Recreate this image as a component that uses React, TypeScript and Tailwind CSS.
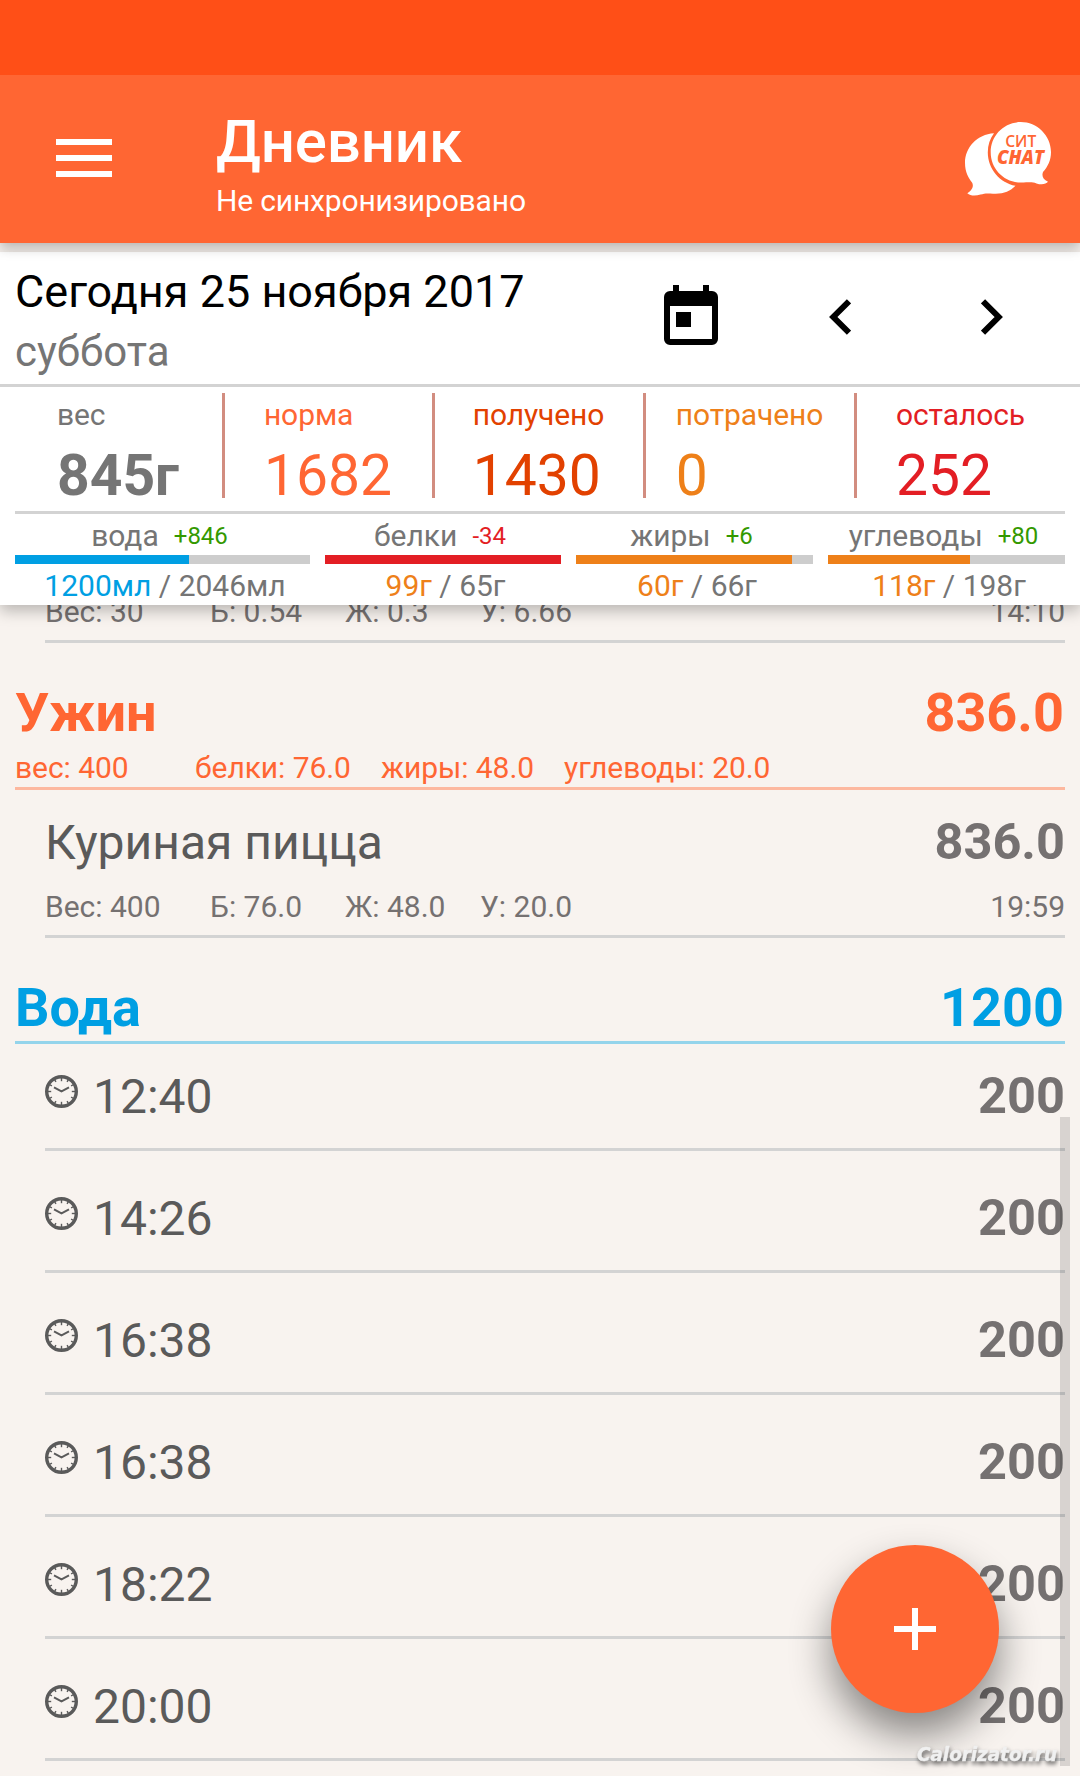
import React from "react";

const stats = [
  { label: "вес", value: "845г", tone: "text-[#757575]", weight: "font-bold" },
  { label: "норма", value: "1682", tone: "text-[#ff6633]", weight: "font-normal" },
  { label: "получено", value: "1430", tone: "text-[#e24100]", weight: "font-normal" },
  { label: "потрачено", value: "0", tone: "text-[#ee8019]", weight: "font-normal" },
  { label: "осталось", value: "252", tone: "text-[#e31e24]", weight: "font-normal" },
];

const macros = [
  { label: "вода", delta: "+846", deltaTone: "text-[#339900]", now: "1200мл", goal: "2046мл", tone: "text-[#009fe3]", bar: "bg-[#009fe3]", pct: 59 },
  { label: "белки", delta: "-34", deltaTone: "text-[#e31e24]", now: "99г", goal: "65г", tone: "text-[#ee8019]", bar: "bg-[#e31e24]", pct: 100 },
  { label: "жиры", delta: "+6", deltaTone: "text-[#339900]", now: "60г", goal: "66г", tone: "text-[#ee8019]", bar: "bg-[#ee8019]", pct: 91 },
  { label: "углеводы", delta: "+80", deltaTone: "text-[#339900]", now: "118г", goal: "198г", tone: "text-[#ee8019]", bar: "bg-[#ee8019]", pct: 60 },
];

const waterTimes = ["12:40", "14:26", "16:38", "16:38", "18:22", "20:00"];

function Clock() {
  const ticks = Array.from({ length: 12 }, (_, i) => i * 30);
  return (
    <svg className="mt-[31px] h-[33px] w-[33px] shrink-0" viewBox="0 0 33 33" fill="none" stroke="#5a5a5a">
      <circle cx="16.5" cy="16.5" r="14.8" strokeWidth="3.4" />
      {ticks.map((a) => (
        <path key={a} d={a % 90 === 0 ? "M16.5 3v3.2" : "M16.5 3v2.4"} strokeWidth="1.4" transform={`rotate(${a} 16.5 16.5)`} />
      ))}
      <path d="M9 12.4 16.5 16.4 24 12.4" strokeWidth="1.9" />
    </svg>
  );
}

function ChatLogo() {
  return (
    <svg className="h-[80px] w-[90px]" viewBox="963 119 90 80">
      <path fill="#fff" d="M994 133.300C977 134.500 965 147.500 965 163C965 172 968.500 178 972 182.500C974 186 972.500 190 967.300 193.300C970.500 196.300 976 196 980.500 194.600C985 193 988 193.300 993 193.700C1003 194.300 1010 191.500 1015.500 185.800C1000 183 987.800 169 987.800 152.500C987.800 145 990 138.500 994 133.300Z" />
      <path fill="#fff" d="M1020.700 122.100C1037 122.100 1051 135.500 1051 152C1051 160 1048 166.500 1043 172C1041.500 176 1043 179.500 1048 181.800C1046 184.500 1041 184.900 1036.500 183.400C1032 181.800 1029 182.500 1021 182.600C1004 182.600 990.700 169 990.700 152.300C990.700 135.500 1004 122.100 1020.700 122.100Z" />
      <text x="1020.700" y="147" textAnchor="middle" textLength="31" lengthAdjust="spacingAndGlyphs" fontFamily="Open Sans" fontWeight="600" fontSize="17" fill="#ff6633">СИТ</text>
      <text x="997" y="164" textLength="47" lengthAdjust="spacingAndGlyphs" fontFamily="Open Sans" fontWeight="800" fontStyle="italic" fontSize="18.500" fill="#ff6633">CHAT</text>
    </svg>
  );
}

function FoodMeta({ values, time }: { values: string[]; time: string }) {
  return (
    <div className="flex h-[36px] text-[30px] leading-[36px] text-[#757171]">
      <span className="w-[165px]">{values[0]}</span>
      <span className="w-[135px]">{values[1]}</span>
      <span className="w-[135px]">{values[2]}</span>
      <span>{values[3]}</span>
      <span className="ml-auto">{time}</span>
    </div>
  );
}

export default function App() {
  return (
    <div className="relative flex h-[1776px] w-[1080px] flex-col overflow-hidden bg-[#f8f3ef] font-[Roboto,sans-serif] whitespace-nowrap">
      <div className="relative z-30 h-[75px] shrink-0 bg-[#ff4f17]" />
      <header className="relative z-20 flex h-[168px] shrink-0 bg-[#ff6633] shadow-[0_4px_12px_rgba(0,0,0,0.28)]">
        <div className="mt-[64px] ml-[56px] flex h-[38px] w-[56px] flex-col justify-between">
          <div className="h-[6px] bg-white" />
          <div className="h-[6px] bg-white" />
          <div className="h-[6px] bg-white" />
        </div>
        <div className="ml-[104px] text-white">
          <h1 className="mt-[32px] h-[70px] text-[60px] leading-[70px] font-medium tracking-[-0.15px]">Дневник</h1>
          <p className="mt-[6px] text-[30px] leading-[36px] tracking-[-0.16px]">Не синхронизировано</p>
        </div>
        <div className="mt-[44px] mr-[27px] ml-auto"><ChatLogo /></div>
      </header>

      <section className="relative z-10 mt-[9px] h-[353px] shrink-0 bg-white shadow-[0_6px_14px_rgba(0,0,0,0.25)]">
        <div className="flex h-[135px] border-b-[3px] border-[#d3d3d3] pl-[15px]">
          <div>
            <div className="mt-[14px] text-[45px] leading-[52px] text-black">Сегодня 25 ноября 2017</div>
            <div className="mt-[8px] text-[42px] leading-[52px] text-[#757575]">суббота</div>
          </div>
          <svg className="absolute top-[33px] left-[664px] h-[60px] w-[54px]" viewBox="0 0 54 60">
            <path fillRule="evenodd" d="M9 0h6v6h24V0h6v6h3a6 6 0 0 1 6 6v42a6 6 0 0 1-6 6H6a6 6 0 0 1-6-6V12a6 6 0 0 1 6-6h3zM6 21v33h42V21zM12 27h15v15H12z" />
          </svg>
          <svg className="absolute top-[47px] left-[829px] h-[36px] w-[22px]" viewBox="0 0 22 36" fill="none" stroke="#000" strokeWidth="6"><path d="M20 2.300 4.300 18 20 33.700" /></svg>
          <svg className="absolute top-[47px] left-[981px] h-[36px] w-[22px]" viewBox="0 0 22 36" fill="none" stroke="#000" strokeWidth="6"><path d="M2 2.300 17.700 18 2 33.700" /></svg>
        </div>
        <div className="mx-[15px] mt-[6px] grid h-[105px] grid-cols-[207px_3px_207px_3px_208px_3px_208px_3px_208px] grid-rows-[105px]">
          {stats.map((s, i) => (
            <React.Fragment key={s.label}>
              {i > 0 && <div className="bg-[#d28d80]" />}
              <div className={`flex justify-center pr-[1px] ${s.tone}`}>
                <div>
                  <div className="mt-[4px] h-[36px] text-[30px] leading-[36px] tracking-[-0.1px]">{s.label}</div>
                  <div className={`mt-[10px] text-[57px] leading-[66px] ${s.weight}`}>{s.value}</div>
                </div>
              </div>
            </React.Fragment>
          ))}
        </div>
        <div className="mx-[15px] mt-[13px] h-[3px] bg-[#d3d3d3]" />
        <div className="mx-[15px] grid grid-cols-[295px_236px_237px_237px] gap-[15px] text-[30px] text-[#757575]">
          {macros.map((m) => (
            <div key={m.label}>
              <div className="mt-[3px] mb-[1px] flex h-[37px] items-center justify-center pr-[6px] leading-[36px]">
                <span>{m.label}</span>
                <span className={`ml-[15px] text-[24px] ${m.deltaTone}`}>{m.delta}</span>
              </div>
              <div className="h-[9px] bg-[#cdcdcd]">
                <div className={`h-full ${m.bar}`} style={{ width: `${m.pct}%` }} />
              </div>
              <div className="mt-[4px] pl-[5px] text-center leading-[36px]">
                <span className={m.tone}>{m.now}</span> / {m.goal}
              </div>
            </div>
          ))}
        </div>
      </section>

      <main className="pr-[15px] pl-[15px]">
        <div className="-mt-[11px] ml-[30px] h-[49px] border-b-[3px] border-[#d3d3d3]">
          <FoodMeta values={["Вес: 30", "Б: 0.54", "Ж: 0.3", "У: 6.66"]} time="14:10" />
        </div>

        <section className="h-[147px] border-b-[3px] border-[#fdb89f] text-[#ff6633]">
          <div className="flex h-[102px] items-end justify-between pr-[1px] text-[54px] leading-[64px] font-bold">
            <span>Ужин</span><span>836.0</span>
          </div>
          <div className="mt-[5px] flex text-[30px] leading-[36px] tracking-[-0.06px]">
            <span className="w-[180px]">вес: 400</span>
            <span className="w-[186px]">белки: 76.0</span>
            <span className="w-[183px]">жиры: 48.0</span>
            <span>углеводы: 20.0</span>
          </div>
        </section>
        <div className="ml-[30px] h-[148px] border-b-[3px] border-[#d3d3d3]">
          <div className="flex h-[99px] justify-between pt-[23px] leading-[60px]">
            <span className="text-[48px] text-[#5a5a5a]">Куриная пицца</span>
            <span className="-mt-[1px] text-[50.5px] font-bold text-[#757171]">836.0</span>
          </div>
          <FoodMeta values={["Вес: 400", "Б: 76.0", "Ж: 48.0", "У: 20.0"]} time="19:59" />
        </div>

        <div className="flex h-[106px] items-end justify-between border-b-[3px] border-[#94d4eb] pr-[1px] pb-[1px] text-[54px] leading-[64px] font-bold text-[#009fe3]">
          <span>Вода</span><span>1200</span>
        </div>
        <div className="-mt-[15px]">
          {waterTimes.map((t, i) => (
            <div key={i} className="ml-[30px] flex h-[122px] border-b-[3px] border-[#d3d3d3] pt-[15px] leading-[60px]">
              <Clock />
              <span className="mt-[23px] ml-[15px] text-[48px] text-[#5a5a5a]">{t}</span>
              <span className="mt-[22px] ml-auto text-[50.5px] font-bold text-[#757171]">200</span>
            </div>
          ))}
        </div>
      </main>

      <div className="absolute top-[1117px] left-[1060px] h-[649px] w-[10px] bg-black/13" />
      <button className="absolute top-[1545px] left-[831px] flex h-[168px] w-[168px] items-center justify-center rounded-full bg-[#ff6633] shadow-[0_22px_40px_rgba(0,0,0,0.45)]">
        <svg className="h-[42px] w-[42px]" viewBox="0 0 42 42" stroke="#fff" strokeWidth="6"><path d="M0 21h42M21 0v42" /></svg>
      </button>
      <svg className="absolute top-[1736px] left-[910px] h-[40px] w-[160px] overflow-visible [filter:drop-shadow(1px_3px_2px_rgba(0,0,0,0.6))]" viewBox="0 0 160 40">
        <text x="7" y="25" textLength="140" lengthAdjust="spacingAndGlyphs" fontFamily="DejaVu Sans" fontWeight="700" fontStyle="italic" fontSize="19.5" fill="#f0f0f0" stroke="#f0f0f0" strokeWidth="0.4">Calorizator.ru</text>
      </svg>
    </div>
  );
}
